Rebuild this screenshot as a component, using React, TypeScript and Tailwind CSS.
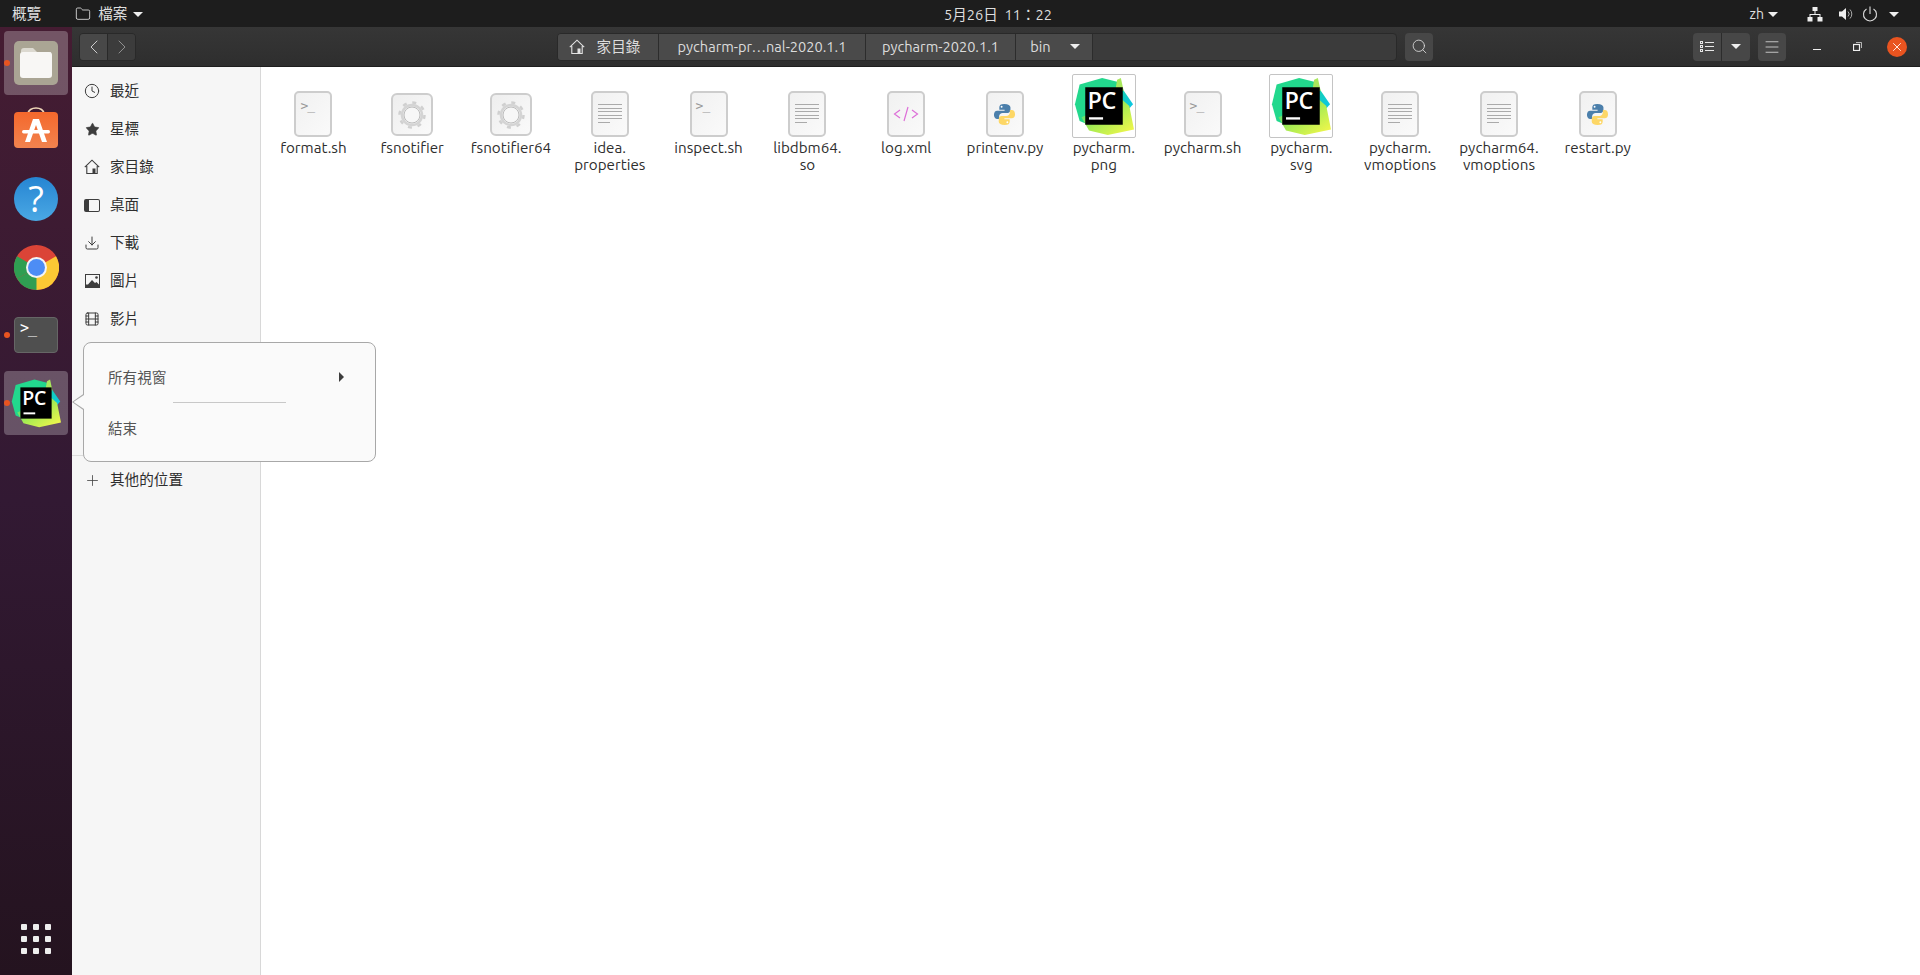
import type { ReactNode } from "react";
import { ChevronLeft, ChevronRight, Clock, Download, Film, Folder, Menu, Plus, Search, Star, X } from "lucide-react";

const font = "font-['Ubuntu','Noto_Sans','Noto_Sans_CJK_TC',sans-serif]";

function Caret({ className = "" }: { className?: string }) {
  return <span className={`inline-block w-0 h-0 border-x-[5px] border-x-transparent border-t-[5px] border-t-[#eee] ${className}`} />;
}

function PyCharmIcon({ size }: { size: number }) {
  return (
    <svg width={size} height={size} viewBox="0 0 64 64" className="block">
      <defs>
        <linearGradient id="pc-a" x1="0" y1="0" x2="1" y2="1">
          <stop offset="0" stopColor="#1fd88c" />
          <stop offset="1" stopColor="#07c3f2" />
        </linearGradient>
        <linearGradient id="pc-b" x1="0" y1="0" x2="1" y2="1">
          <stop offset="0" stopColor="#21d789" />
          <stop offset="0.5" stopColor="#a8ec52" />
          <stop offset="1" stopColor="#fcf84a" />
        </linearGradient>
      </defs>
      <polygon points="42,6 52,14 63,30 54,40 40,30" fill="url(#pc-a)" />
      <polygon points="6,9 30,2 46,6 50,30 30,58 6,48 1,30" fill="#22d88d" />
      <polygon points="46,4 50,2 53,16 44,16" fill="#a9e85c" />
      <polygon points="50,24 59,32 64,57 36,63 16,58 8,44 30,34" fill="url(#pc-b)" />
      <rect x="12" y="12" width="40" height="40" fill="#000" />
      <text x="14.5" y="35" fill="#fff" fontSize="25" fontWeight="600" fontFamily="'Open Sans',sans-serif" letterSpacing="-0.5">PC</text>
      <rect x="16" y="44" width="15" height="2.5" fill="#fff" />
    </svg>
  );
}

function PythonGlyph() {
  return (
    <svg width="23" height="23" viewBox="0 0 24 24">
      <path d="M11.8 1C8 1 6.6 2.3 6.6 4.4V7h5.5v1H4.4C2.3 8 1 9.7 1 12.2c0 2.8 1.4 4.4 3.4 4.4h2V14c0-2 1.7-3.6 3.7-3.6h5.2c1.6 0 2.9-1.4 2.9-3V4.4C18 2.4 16 1 11.8 1Z" fill="#4b7fab" />
      <circle cx="9" cy="3.9" r="1" fill="#fff" />
      <path d="M12.2 23c3.8 0 5.2-1.3 5.2-3.4V17h-5.5v-1h7.7c2.1 0 3.4-1.7 3.4-4.2 0-2.8-1.4-4.4-3.4-4.4h-2V10c0 2-1.7 3.6-3.7 3.6H8.9c-1.6 0-2.9 1.4-2.9 3v3C6 21.6 8 23 12.2 23Z" fill="#fdd766" />
      <circle cx="15" cy="20.1" r="1" fill="#fff" />
    </svg>
  );
}

function Page({ children }: { children: ReactNode }) {
  return (
    <div className="relative mb-[1px] h-[46px] w-[38px] rounded-[5px] border-2 border-[#cdcdcd] bg-gradient-to-br from-[#f1f1f1] to-[#fafafa]">
      {children}
    </div>
  );
}

function ScriptIcon() {
  return (
    <Page>
      <span className="absolute left-[4px] top-[6px] font-['DejaVu_Sans_Mono',monospace] text-[13px] leading-[14px] text-[#999] tracking-[-1px]">&gt;_</span>
    </Page>
  );
}

function TextIcon() {
  return (
    <Page>
      <div className="flex flex-col items-center gap-[2.6px] pt-[11px]">
        {[0, 1, 2, 3, 4].map((i) => (
          <span key={i} className="h-px w-[24px] bg-[#aaa]" />
        ))}
        <span className="h-px w-[24px]">
          <span className="block h-px w-[12px] bg-[#aaa]" />
        </span>
      </div>
    </Page>
  );
}

function GearIcon() {
  return (
    <div className="mb-[2px] flex h-[43px] w-[42px] items-center justify-center rounded-[6px] border-2 border-[#cdcdcd] bg-gradient-to-br from-[#eee] to-[#fafafa]">
      <svg width="30" height="30" viewBox="0 0 30 30">
        <circle cx="15" cy="15" r="12.5" fill="none" stroke="#d0d0d0" strokeWidth="2.5" strokeDasharray="4 5.8" />
        <circle cx="15" cy="15" r="10" fill="none" stroke="#d4d4d4" strokeWidth="2.5" />
        <circle cx="15" cy="15" r="8" fill="#f7f7f7" stroke="#bcbcbc" strokeWidth="1" />
      </svg>
    </div>
  );
}

function XmlIcon() {
  return (
    <Page>
      <span className="absolute inset-0 flex items-center justify-center">
        <svg width="26" height="16" viewBox="0 0 26 16" fill="none" stroke="#dd6fd8" strokeWidth="1.2">
          <path d="M7 4 1.5 8 7 12M19 4l5.5 4L19 12M15 1l-4 14" />
        </svg>
      </span>
    </Page>
  );
}

function PyIcon() {
  return (
    <Page>
      <span className="absolute inset-0 flex items-center justify-center">
        <PythonGlyph />
      </span>
    </Page>
  );
}

function Thumb() {
  return (
    <div className="flex h-[64px] w-[64px] items-center justify-center rounded-[2px] border border-[#c4c4c4] bg-white">
      <PyCharmIcon size={60} />
    </div>
  );
}

const files: { label: string[]; icon: ReactNode }[] = [
  { label: ["format.sh"], icon: <ScriptIcon /> },
  { label: ["fsnotifier"], icon: <GearIcon /> },
  { label: ["fsnotifier64"], icon: <GearIcon /> },
  { label: ["idea.", "properties"], icon: <TextIcon /> },
  { label: ["inspect.sh"], icon: <ScriptIcon /> },
  { label: ["libdbm64.", "so"], icon: <TextIcon /> },
  { label: ["log.xml"], icon: <XmlIcon /> },
  { label: ["printenv.py"], icon: <PyIcon /> },
  { label: ["pycharm.", "png"], icon: <Thumb /> },
  { label: ["pycharm.sh"], icon: <ScriptIcon /> },
  { label: ["pycharm.", "svg"], icon: <Thumb /> },
  { label: ["pycharm.", "vmoptions"], icon: <TextIcon /> },
  { label: ["pycharm64.", "vmoptions"], icon: <TextIcon /> },
  { label: ["restart.py"], icon: <PyIcon /> },
];

function HomeGlyph({ color }: { color: string }) {
  return (
    <svg width="16" height="16" viewBox="0 0 16 16" fill="none" stroke={color} strokeWidth="1.1">
      <path d="M.8 8.2 8 1.2l7.2 7M2.8 7v7.5h10.4V7" />
      <rect x="8.5" y="9.5" width="3" height="5" fill={color} stroke="none" />
    </svg>
  );
}

const places: { name: string; icon: ReactNode }[] = [
  { name: "最近", icon: <Clock size={16} strokeWidth={1.5} /> },
  { name: "星標", icon: <Star size={15} fill="currentColor" strokeWidth={1} /> },
  { name: "家目錄", icon: <HomeGlyph color="#3d3d3d" /> },
  {
    name: "桌面",
    icon: <span className="block h-[13px] w-[16px] rounded-[2px] border-[1.5px] border-l-[5px] border-[#3d3d3d]" />,
  },
  { name: "下載", icon: <Download size={16} strokeWidth={1.5} /> },
  {
    name: "圖片",
    icon: (
      <svg width="15" height="14" viewBox="0 0 15 14">
        <path fillRule="evenodd" d="M0 0h15v14H0ZM1 1v9.500h2L7 6l3 3 1.500-1 2.500 2.500V1Z" fill="#3d3d3d" />
        <circle cx="11.500" cy="3.500" r="1.300" fill="#3d3d3d" />
      </svg>
    ),
  },
  { name: "影片", icon: <Film size={16} strokeWidth={1.5} /> },
];

function Place({ name, icon }: { name: string; icon: ReactNode }) {
  return (
    <div className="flex h-[38px] items-center text-[#2e2e2e]">
      <span className="flex w-[38px] justify-center pl-[2px] text-[#3d3d3d]">{icon}</span>
      <span className="text-[14.6px]">{name}</span>
    </div>
  );
}

function DockTile({ active, dot, children }: { active?: boolean; dot?: boolean; children: ReactNode }) {
  return (
    <div className={`relative flex h-[64px] w-[64px] items-center justify-center rounded-[4px] ${active ? "bg-white/25" : ""}`}>
      {dot && <span className="absolute left-[0px] top-[29px] h-[6px] w-[6px] rounded-full bg-[#e95420]" />}
      {children}
    </div>
  );
}

function Dock() {
  return (
    <aside className="flex w-[72px] shrink-0 flex-col items-center justify-between bg-gradient-to-b from-[#451c32] via-[#321933] to-[#24131f] pb-[21px] pt-[4px]">
      <div className="flex flex-col gap-[4px]">
        <DockTile active dot>
          <div className="flex h-[44px] w-[44px] items-center justify-center rounded-[5px] bg-[#aaa594]">
            <svg width="34" height="30" viewBox="0 0 34 30">
              <path d="M2 3a3 3 0 0 1 3-3h9l4 4h14v2H2Z" fill="#dcd9d0" />
              <rect x="1" y="4" width="32" height="26" rx="3" fill="#f8f7f5" />
            </svg>
          </div>
        </DockTile>
        <DockTile>
          <svg width="44" height="44" viewBox="0 0 44 44" className="-mt-[6px]">
            <defs>
              <linearGradient id="store" x1="0" y1="0" x2="0" y2="1">
                <stop offset="0" stopColor="#f4682c" />
                <stop offset="1" stopColor="#f2834f" />
              </linearGradient>
            </defs>
            <path d="M14 8c0-8 16-8 16 0" fill="none" stroke="#f0d8b8" strokeWidth="1.6" />
            <rect y="6" width="44" height="36" rx="4" fill="url(#store)" />
            <path d="M19 13h6l8 23h-5l-6-17-6 17h-5Z" fill="#fff" />
            <rect x="8" y="24" width="28" height="3.500" rx="1.700" fill="#fff" />
          </svg>
        </DockTile>
        <DockTile>
          <div className="flex h-[44px] w-[44px] items-center justify-center rounded-full bg-gradient-to-b from-[#2585d2] to-[#4aa8e4] font-['Open_Sans',sans-serif] text-[36px] leading-none text-white">?</div>
        </DockTile>
        <DockTile>
          <svg width="45" height="45" viewBox="-22.5 -22.5 45 45">
            <circle r="22.5" fill="#db4437" />
            <path d="M0 0-19.5 11.25A22.5 22.5 0 0 1-19.5-11.25Z" fill="#2f9e52" />
            <path d="M0 0-19.5 11.25A22.5 22.5 0 0 0 0 22.5l2 0Z" fill="#2f9e52" />
            <path d="M0 0 19.5-11.25A22.5 22.5 0 0 1 0 22.5Z" fill="#fcc934" />
            <circle r="10.5" fill="#f4f4f4" />
            <circle r="8.5" fill="#4d8df5" />
          </svg>
        </DockTile>
        <DockTile dot>
          <div className="h-[36px] w-[44px] rounded-[4px] border border-[#666] bg-[#4f4f4f] pl-[5px] font-['DejaVu_Sans_Mono',monospace] text-[15px] leading-[20px] tracking-[-1px] text-white">&gt;_</div>
        </DockTile>
        <DockTile active dot>
          <PyCharmIcon size={50} />
        </DockTile>
      </div>
      <div className="grid grid-cols-3 gap-[6px]">
        {Array.from({ length: 9 }).map((_, i) => (
          <span key={i} className="h-[6px] w-[6px] rounded-[1px] bg-[#eee]" />
        ))}
      </div>
    </aside>
  );
}

function Crumb({ width, children }: { width: string; children: ReactNode }) {
  return (
    <div className={`flex h-full items-center justify-center border-r border-[#2c2c2c] bg-[#4a4a4a] ${width}`}>
      {children}
    </div>
  );
}

function Toolbar() {
  return (
    <header className="relative flex h-[40px] items-center border-b border-[#1e1e1e] bg-gradient-to-b from-[#363636] to-[#2e2e2e] pl-[7px] text-[14.6px] text-[#dcdcdc]">
      <div className="flex h-[28px] w-[57px] overflow-hidden rounded-[4px] border border-[#292929]">
        <span className="flex flex-1 items-center justify-center border-r border-[#292929] bg-[#484848]">
          <ChevronLeft size={24} strokeWidth={0.9} />
        </span>
        <span className="flex flex-1 items-center justify-center bg-[#3c3c3c] text-[#999]">
          <ChevronRight size={24} strokeWidth={0.9} />
        </span>
      </div>
      <div className="ml-[421px] flex h-[28px] w-[840px] overflow-hidden rounded-[4px] border border-[#292929] bg-[#3b3b3b]">
        <Crumb width="w-[101px] gap-[12px] pr-[7px]">
          <HomeGlyph color="#e4e4e4" />
          <span>家目錄</span>
        </Crumb>
        <Crumb width="w-[207px]">pycharm-pr…nal-2020.1.1</Crumb>
        <Crumb width="w-[150px]">pycharm-2020.1.1</Crumb>
        <Crumb width="w-[77px] gap-[19px] pl-[2px]">
          <span>bin</span>
          <Caret />
        </Crumb>
      </div>
      <span className="ml-[8px] flex h-[28px] w-[28px] items-center justify-center rounded-[4px] bg-[#474747]">
        <Search size={17} strokeWidth={1.2} />
      </span>
      <div className="ml-[260px] flex h-[28px] w-[57px] overflow-hidden rounded-[4px] bg-[#474747]">
        <span className="flex w-[29px] items-center justify-center border-r border-[#2c2c2c]">
          <svg width="14" height="12" viewBox="0 0 14 12" fill="none" stroke="#e6e6e6">
            <rect x="0.5" y="0.5" width="2" height="2" />
            <rect x="0.5" y="4.5" width="2" height="2" />
            <rect x="0.5" y="8.5" width="2" height="2" />
            <path d="M5 1.5h9M5 5.5h9M5 9.5h9" />
          </svg>
        </span>
        <span className="flex flex-1 items-center justify-center">
          <Caret />
        </span>
      </div>
      <span className="ml-[8px] flex h-[28px] w-[28px] items-center justify-center rounded-[4px] bg-[#474747]">
        <Menu size={18} strokeWidth={1.1} />
      </span>
      <span className="ml-[22px] flex w-[18px] justify-center pt-[6px]">
        <span className="h-[1.5px] w-[8px] bg-[#eee]" />
      </span>
      <span className="ml-[22px] flex w-[18px] justify-center">
        <svg width="9" height="9" viewBox="0 0 9 9" fill="none" stroke="#eee">
          <rect x="0.5" y="2.5" width="6" height="6" strokeWidth="1.2" />
          <path d="M3 .5h5.500V6" strokeWidth="0.7" />
        </svg>
      </span>
      <span className="ml-[21px] flex h-[20px] w-[20px] items-center justify-center rounded-full bg-[#e95420] text-white">
        <X size={14} strokeWidth={1.5} />
      </span>
    </header>
  );
}

function TopBar() {
  return (
    <div className="relative flex h-[27px] items-center bg-[#1d1d1d] pt-[1px] text-[14px] text-[#dedede]">
      <span className="ml-[12px] text-[14.6px]">概覽</span>
      <Folder size={16} strokeWidth={1.3} className="ml-[34px]" />
      <span className="ml-[7px] text-[14.6px]">檔案</span>
      <Caret className="ml-[6px]" />
      <span className="absolute left-1/2 top-[4px] ml-[38px] -translate-x-1/2 whitespace-nowrap text-[14.6px]">5月26日&nbsp; 11：22</span>
      <div className="ml-auto flex items-center pr-[21px]">
        <span>zh</span>
        <Caret className="ml-[4px]" />
        <svg width="16" height="15" viewBox="0 0 16 15" className="ml-[29px]" fill="#eee">
          <rect x="5.5" y="0" width="5" height="4" />
          <rect x="0.500" y="10" width="5" height="4.500" />
          <rect x="10.500" y="10" width="5" height="4.500" />
          <path d="M7.500 4h1v3H13.500v3h-1V8h-9v2h-1V7h5Z" />
        </svg>
        <svg width="16" height="16" viewBox="0 0 16 16" className="ml-[15px]" fill="none" stroke="#aaa">
          <path d="M1 5.500h3L8 2v12l-4-3.500H1Z" fill="#eee" stroke="none" />
          <path d="M10 5.500a3.500 3.500 0 0 1 0 5M12 3.500a6.500 6.500 0 0 1 0 9" />
        </svg>
        <svg width="16" height="16" viewBox="0 0 16 16" className="ml-[8px]" fill="none" stroke="#ddd" strokeWidth="1.1">
          <path d="M4.500 3a6.500 6.500 0 1 0 7 0M8 .5V8" />
        </svg>
        <Caret className="ml-[11px]" />
      </div>
    </div>
  );
}

function QuitMenu() {
  return (
    <div className="absolute left-[72px] top-[342px] flex items-center text-[14.6px] text-[#555]">
      <span className="relative z-10 -mr-[1px] h-[17px] w-[12px] bg-[#a8a8a8] [clip-path:polygon(100%_0,0_50%,100%_100%)]">
        <span className="absolute inset-[1.5px_0_1.5px_1.5px] block bg-[#fafafa] [clip-path:polygon(100%_0,0_50%,100%_100%)]" />
      </span>
      <div className="h-[120px] w-[293px] rounded-[8px] border border-[#a8a8a8] bg-[#fafafa] px-[24px]">
        <div className="flex h-[59px] items-center justify-between pr-[7px] pt-[11px]">
          <span>所有視窗</span>
          <span className="-mt-[2px] h-0 w-0 border-y-[5px] border-l-[5px] border-y-transparent border-l-[#3d3d3d]" />
        </div>
        <div className="ml-[65px] h-px w-[113px] bg-[#c8c8c8]" />
        <div className="flex h-[52px] items-center">結束</div>
      </div>
    </div>
  );
}

export default function App() {
  return (
    <div className={`relative flex h-[975px] w-[1920px] flex-col overflow-hidden bg-white ${font}`}>
      <TopBar />
      <div className="flex min-h-0 flex-1">
        <Dock />
        <div className="flex min-w-0 flex-1 flex-col">
          <Toolbar />
          <div className="flex min-h-0 flex-1">
            <nav className="w-[189px] shrink-0 border-r border-[#d8d8d8] bg-[#f6f6f6] pt-[5px]">
              {places.map((p) => (
                <Place key={p.name} name={p.name} icon={p.icon} />
              ))}
              <div className="h-[114px]" />
              <div className="mt-[3px] h-px bg-[#dcdcdc]" />
              <div className="mt-[5px]">
                <Place name="其他的位置" icon={<Plus size={17} strokeWidth={1.1} />} />
              </div>
            </nav>
            <main className="grid flex-1 auto-rows-min grid-cols-[repeat(14,98.8px)] pl-[3px] pt-[7px] text-[15.2px] leading-[17px] text-[#2e2e2e]">
              {files.map((f, i) => (
                <div key={i} className="flex flex-col items-center text-center">
                  <div className="flex h-[64px] items-end">{f.icon}</div>
                  <div className="mt-[1px]">
                    {f.label.map((l) => (
                      <div key={l}>{l}</div>
                    ))}
                  </div>
                </div>
              ))}
            </main>
          </div>
        </div>
      </div>
      <QuitMenu />
    </div>
  );
}
